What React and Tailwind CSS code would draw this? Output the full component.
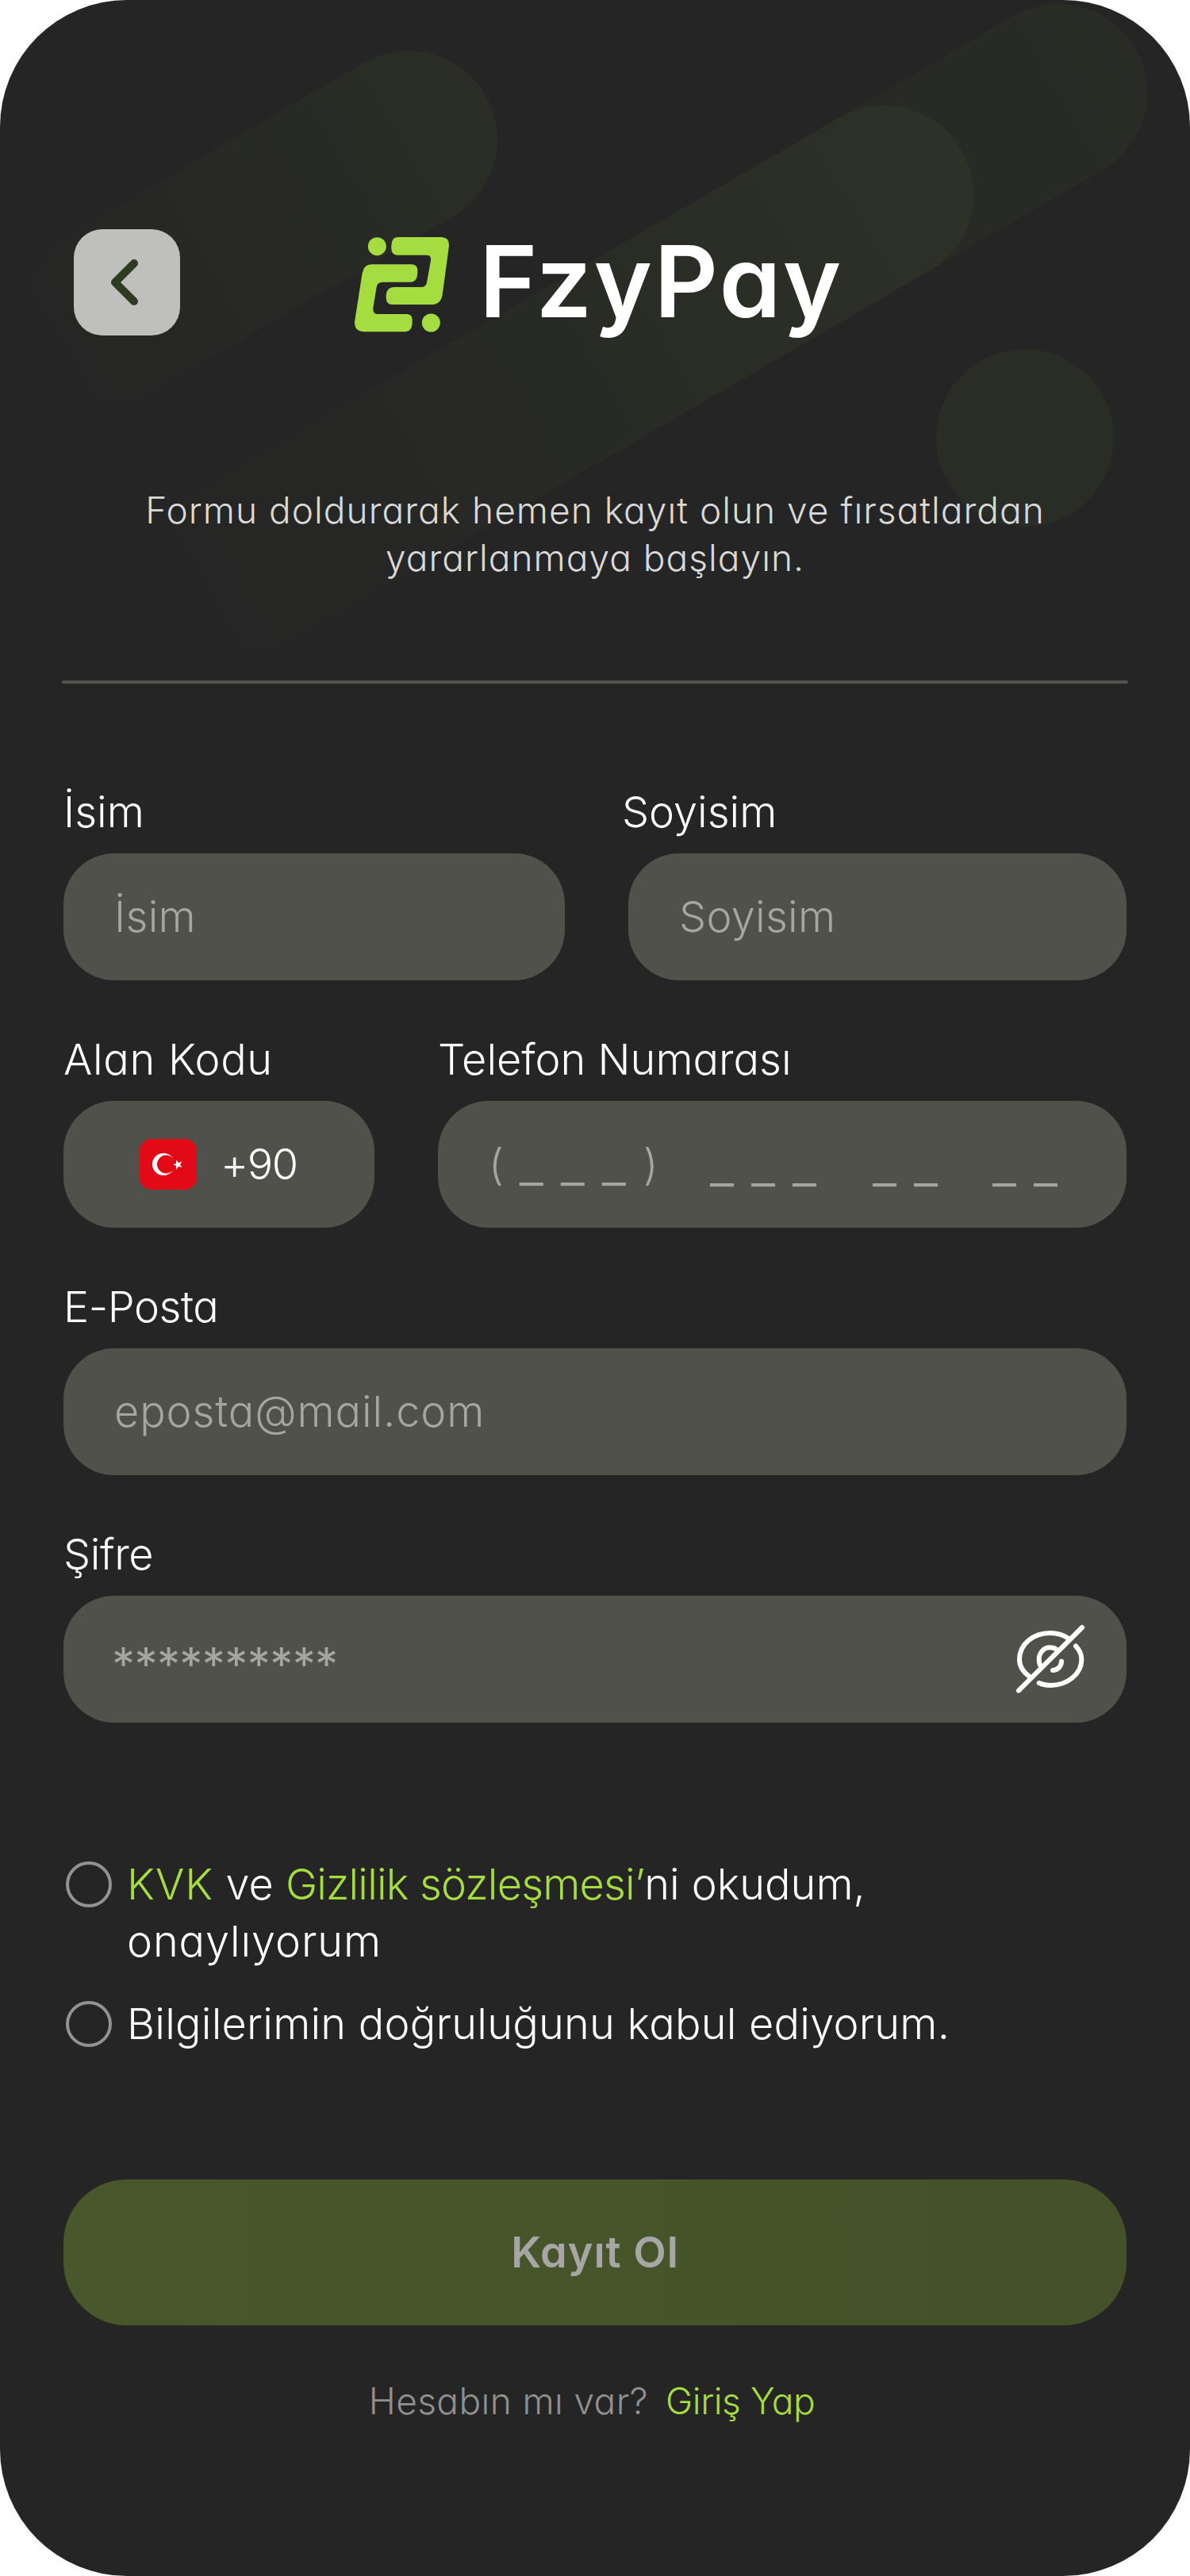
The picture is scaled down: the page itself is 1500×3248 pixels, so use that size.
const LABEL = 'block h-[72px] mb-4 text-[54px] leading-[72px] text-white whitespace-nowrap';
const FIELD = 'h-40 rounded-[64px] bg-[#50514a] flex items-center';
const PLACEHOLDER = 'leading-[72px] text-[#a5a6a1] whitespace-nowrap';

function Backdrop() {
  return (
    <svg className="absolute inset-0 w-[1500px] h-[900px]" viewBox="0 0 1500 900" fill="none" strokeLinecap="round" strokeWidth="224">
      <defs>
        <linearGradient id="beamLeft" gradientUnits="userSpaceOnUse" x1="612" y1="120" x2="45" y2="450">
          <stop stopColor="#a5dc40" stopOpacity="0.045" />
          <stop offset="1" stopColor="#a5dc40" stopOpacity="0" />
        </linearGradient>
        <linearGradient id="beamCenter" gradientUnits="userSpaceOnUse" x1="1212" y1="189" x2="198" y2="776">
          <stop stopColor="#a5dc40" stopOpacity="0.04" />
          <stop offset="1" stopColor="#a5dc40" stopOpacity="0" />
        </linearGradient>
        <linearGradient id="beamRight" gradientUnits="userSpaceOnUse" x1="1431" y1="61" x2="420" y2="646">
          <stop stopColor="#a5dc40" stopOpacity="0.035" />
          <stop offset="1" stopColor="#a5dc40" stopOpacity="0" />
        </linearGradient>
      </defs>
      <path d="M515 176 142 393" stroke="url(#beamLeft)" />
      <path d="M1115 245 295 720" stroke="url(#beamCenter)" />
      <path d="M1334 117 520 590" stroke="url(#beamRight)" />
      <circle cx="1292" cy="552" r="112" fill="#a5dc40" fillOpacity="0.045" />
    </svg>
  );
}

function LogoMark() {
  return (
    <svg className="w-[120px] h-[120px] shrink-0" viewBox="52 57 360 360" fill="#a5dc40">
      <circle cx="137" cy="92" r="34.5" />
      <circle cx="341" cy="381" r="34.5" />
      <path d="M214 57H380Q410 57 409 90L384 275Q378 312 343 312H195Q171 312 171 286V276Q174 247 200 246H303Q322 246 325 228L340 145Q342 125 325 125H213Q191 125 191 99V88Q193 57 214 57Z" />
      <path d="M117 160H266Q290 160 290 184V195Q288 226 264 227H158Q138 227 135 246L122 325Q120 348 139 348H248Q270 348 270 370V382Q268 414 246 415H84Q51 414 52 378L81 193Q87 160 117 160Z" />
    </svg>
  );
}

function TurkishFlag() {
  return (
    <svg className="w-[72px] h-16 shrink-0" viewBox="0 0 72 64">
      <rect width="72" height="64" rx="15" fill="#e30a17" />
      <circle cx="30" cy="32" r="14" fill="#fff" />
      <circle cx="33.4" cy="32" r="11.4" fill="#e30a17" />
      <path d="M42 32.5l4-1.4.2-4.6 2.7 3.5 4.7-1.4-2.7 3.7 2.6 3.7-4.4-1.3-2.9 3.7-.1-4.6z" fill="#fff" />
    </svg>
  );
}

function EyeOff() {
  return (
    <svg className="w-[130px] h-[120px] mb-1 shrink-0" viewBox="0 0 390 360" fill="none" stroke="#fff" strokeWidth="18" strokeLinecap="round">
      <path d="M72 305 312 66" />
      <path d="M260 107C240 94 216 87 192 87C126 87 75 130 75 187C75 213 91 237 116 254" />
      <path d="M288 136C302 151 310 168 310 187C310 242 257 285 192 285C177 285 162 282 149 276" />
      <path d="M216 150C209 144 201 142 190 142C167 142 149 162 149 186C149 197 151 207 156 214" />
      <path d="M234 194C234 212 219 228 201 228" />
    </svg>
  );
}

function Field({ label, placeholder, className, labelClass, textClass }) {
  return (
    <div className={className}>
      <label className={`${LABEL} ${labelClass}`}>{label}</label>
      <div className={`${FIELD} pl-16`}>
        <span className={`${PLACEHOLDER} text-[54px] ${textClass}`}>{placeholder}</span>
      </div>
    </div>
  );
}

function Radio() {
  return <span className="mt-[7px] ml-[3px] mr-[19px] w-[58px] h-[58px] shrink-0 rounded-full border-4 border-[#929290]"></span>;
}

export default function App() {
  return (
    <div className="w-[1500px] h-[3248px] bg-white">
      <div className="relative w-full h-full overflow-hidden rounded-[160px] bg-[#252525] px-20 pt-[289px] font-light [font-family:Inter,'Liberation_Sans',sans-serif] [font-feature-settings:'cv11']">
        <Backdrop />
        <div className="relative">
          <header className="flex items-center h-[134px] pl-[13px]">
            <button className="w-[134px] h-[134px] rounded-[36px] bg-[#bfbfbd] flex items-center justify-center">
              <svg className="w-[134px] h-[134px]" viewBox="0 0 134 134" fill="none" stroke="#2f3b21" strokeWidth="10" strokeLinecap="round" strokeLinejoin="round">
                <path d="M76 43 52 67l24 24" />
              </svg>
            </button>
            <div className="flex items-center ml-[220px] mt-[6px]">
              <LogoMark />
              <span className="ml-[37px] -mt-2 text-[125px] leading-[134px] font-semibold tracking-[2.2px] text-white">FzyPay</span>
            </div>
          </header>

          <p className="mt-[190px] text-center text-[46px] leading-[60px] tracking-[1.03px] text-[#d9d9d8]">
            <span className="block whitespace-nowrap">Formu doldurarak hemen kayıt olun ve fırsatlardan</span>
            <span className="block whitespace-nowrap">yararlanmaya başlayın.</span>
          </p>

          <div className="mt-[125px] -mx-0.5 h-1 rounded-full bg-[#53544d]"></div>

          <form className="mt-[126px] space-y-16">
            <div className="flex gap-20">
              <Field label="İsim" placeholder="İsim" className="w-[632px]" labelClass="" textClass="tracking-[0.3px]" />
              <Field label="Soyisim" placeholder="Soyisim" className="w-[628px]" labelClass="-ml-2" textClass="tracking-[0.3px]" />
            </div>
            <div className="flex gap-20">
              <div className="w-[392px]">
                <label className={`${LABEL} tracking-[0.7px]`}>Alan Kodu</label>
                <div className={`${FIELD} pl-24`}>
                  <TurkishFlag />
                  <span className="ml-[30px] text-[54px] leading-[72px] tracking-[-1.5px] text-white">+90</span>
                </div>
              </div>
              <div className="w-[868px]">
                <label className={LABEL}>Telefon Numarası</label>
                <div className={`${FIELD} pl-16 ${PLACEHOLDER} text-[67px] tracking-[22px]`}>
                  <span className="w-[279px]">
                    <span className="text-[54px] tracking-[20px] align-[3px]">(</span>
                    ___
                    <span className="text-[54px] tracking-normal align-[3px]">)</span>
                  </span>
                  <span className="w-[205px]">___</span>
                  <span className="w-[151px]">__</span>
                  <span>__</span>
                </div>
              </div>
            </div>
            <Field label="E-Posta" placeholder="eposta@mail.com" className="" labelClass="tracking-[-0.4px]" textClass="tracking-[0.9px]" />
            <div>
              <label className={`${LABEL} tracking-[-0.4px]`}>Şifre</label>
              <div className={`${FIELD} pl-[61px] pr-[30px] justify-between`}>
                <span className={`${PLACEHOLDER} pt-3 text-[58px] font-normal tracking-[-0.6px]`}>**********</span>
                <EyeOff />
              </div>
            </div>
          </form>

          <div className="mt-[168px] space-y-8 text-[54px] leading-[72px] text-white">
            <div className="flex items-start">
              <Radio />
              <p>
                <span className="block whitespace-nowrap">
                  <span className="text-[#a5dc40] tracking-[1px]">KVK</span> ve{' '}
                  <span className="text-[#a5dc40] tracking-[-0.8px]">Gizlilik sözleşmesi’</span>ni okudum,
                </span>
                <span className="block tracking-[0.9px]">onaylıyorum</span>
              </p>
            </div>
            <div className="flex items-start">
              <Radio />
              <p className="whitespace-nowrap tracking-[0.25px]">Bilgilerimin doğruluğunu kabul ediyorum.</p>
            </div>
          </div>

          <button className="mt-40 w-full h-[184px] rounded-[80px] bg-linear-to-r from-[#48582a] to-[#445129] text-[54px] leading-[72px] font-semibold tracking-[1px] text-[#a6a7a4]">
            Kayıt Ol
          </button>

          <div className="mt-[65px] -ml-[8px] flex justify-center text-[46px] leading-[60px] whitespace-nowrap">
            <span className="text-[#90908e] tracking-[0.4px]">Hesabın mı var?</span>
            <a className="ml-[22px] text-[#a5dc40] tracking-[-0.4px]">Giriş Yap</a>
          </div>
        </div>
      </div>
    </div>
  );
}
